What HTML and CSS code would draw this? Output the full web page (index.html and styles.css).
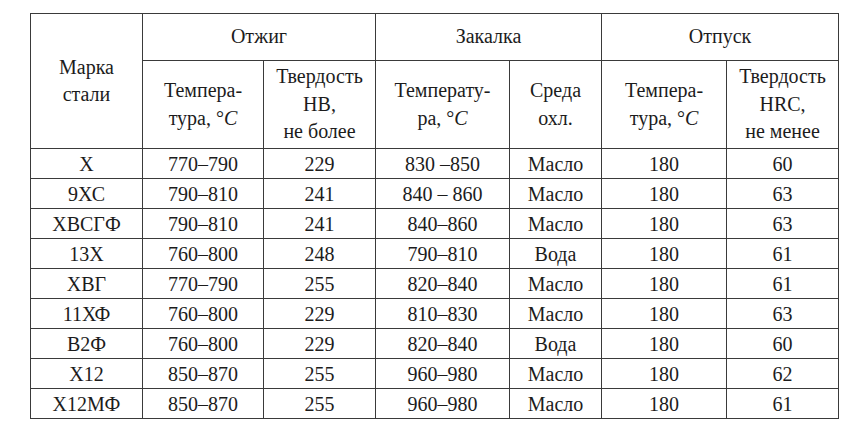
FILE: index.html
```html
<!DOCTYPE html>
<html lang="ru">
<head>
<meta charset="utf-8">
<title>Режимы термообработки</title>
<link rel="stylesheet" href="styles.css">
</head>
<body>
<table class="steel">
  <colgroup>
    <col class="c1"><col class="c2"><col class="c3"><col class="c4"><col class="c5"><col class="c6"><col class="c7">
  </colgroup>
  <thead>
    <tr class="h1">
      <th rowspan="2">Марка<br>стали</th>
      <th colspan="2">Отжиг</th>
      <th colspan="2">Закалка</th>
      <th colspan="2">Отпуск</th>
    </tr>
    <tr class="h2">
      <th>Темпера-<br>тура, °<i>C</i></th>
      <th>Твердость<br>НВ,<br>не более</th>
      <th>Температу-<br>ра, °<i>C</i></th>
      <th>Среда<br>охл.</th>
      <th>Темпера-<br>тура, °<i>C</i></th>
      <th>Твердость<br>HRC,<br>не менее</th>
    </tr>
  </thead>
  <tbody>
    <tr><td>Х</td><td>770–790</td><td>229</td><td>830 –850</td><td>Масло</td><td>180</td><td>60</td></tr>
    <tr><td>9ХС</td><td>790–810</td><td>241</td><td>840 – 860</td><td>Масло</td><td>180</td><td>63</td></tr>
    <tr><td>ХВСГФ</td><td>790–810</td><td>241</td><td>840–860</td><td>Масло</td><td>180</td><td>63</td></tr>
    <tr><td>13Х</td><td>760–800</td><td>248</td><td>790–810</td><td>Вода</td><td>180</td><td>61</td></tr>
    <tr><td>ХВГ</td><td>770–790</td><td>255</td><td>820–840</td><td>Масло</td><td>180</td><td>61</td></tr>
    <tr><td>11ХФ</td><td>760–800</td><td>229</td><td>810–830</td><td>Масло</td><td>180</td><td>63</td></tr>
    <tr><td>В2Ф</td><td>760–800</td><td>229</td><td>820–840</td><td>Вода</td><td>180</td><td>60</td></tr>
    <tr><td>Х12</td><td>850–870</td><td>255</td><td>960–980</td><td>Масло</td><td>180</td><td>62</td></tr>
    <tr><td>Х12МФ</td><td>850–870</td><td>255</td><td>960–980</td><td>Масло</td><td>180</td><td>61</td></tr>
  </tbody>
</table>
</body>
</html>
```

FILE: styles.css
```css
html, body {
  margin: 0;
  padding: 0;
  background: #ffffff;
}

body {
  padding: 13px 0 0 30px;
  font-family: "Liberation Serif", "Times New Roman", Tinos, "Noto Serif", "DejaVu Serif", "FreeSerif", "Nimbus Roman", "Nimbus Roman No9 L", Times, serif;
  font-size: 20px;
  color: #1c1c1c;
}

.steel {
  border-collapse: collapse;
  table-layout: fixed;
  width: 808px;
  font: inherit;
}

.steel th,
.steel td {
  border: 1px solid #3a3a3a;
  padding: 0;
  text-align: center;
  vertical-align: middle;
  font-weight: normal;
  font-family: inherit;
}

.steel th {
  line-height: 27.5px;
}

.steel td {
  line-height: 22px;
}

.c1 { width: 112px; }
.c2 { width: 121px; }
.c3 { width: 112px; }
.c4 { width: 134px; }
.c5 { width: 92px; }
.c6 { width: 125px; }
.c7 { width: 112px; }

.h1 th {
  height: 46px;
}

.h2 th {
  height: 87px;
}

.steel tbody td {
  height: 29px;
}

.steel i {
  font-style: italic;
}
```
